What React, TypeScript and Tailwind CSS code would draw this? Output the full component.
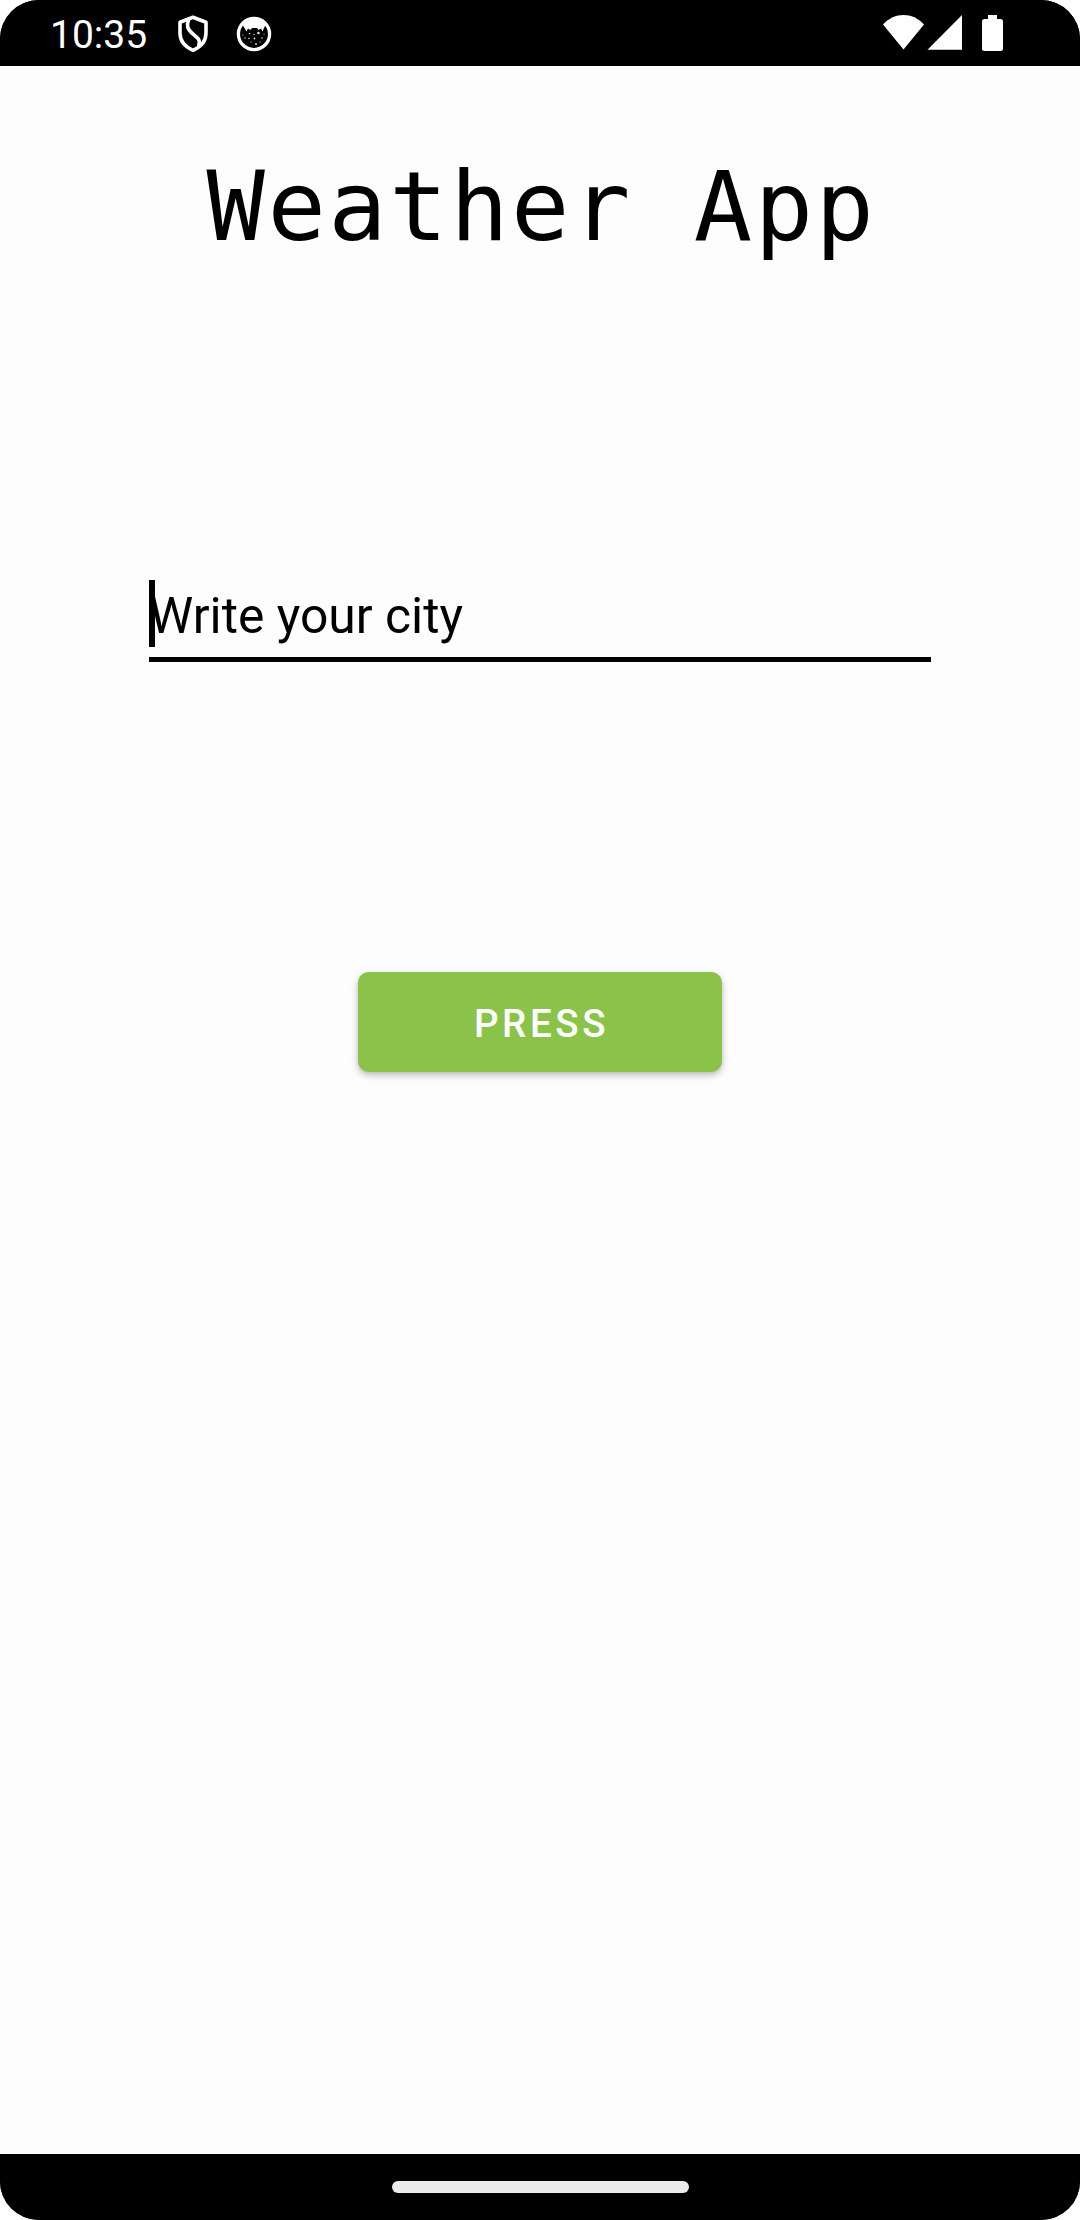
function ShieldIcon() {
  return (
    <svg className="h-[38px] w-[32px]" viewBox="0 0 32 38" fill="none" stroke="#fff" strokeWidth="3.600" strokeLinejoin="round" strokeLinecap="round">
      <path d="M16 2.300 29 7.300V18c0 7.500-4.500 13.600-13 17.300C7.500 31.600 3 25.500 3 18V7.300z" />
      <path d="M11.500 5.200c-2 5-1.500 8.800 3.300 12.800 5.500 4.500 9 6.500 7 12" />
    </svg>
  );
}

function CatIcon() {
  return (
    <svg className="h-[36px] w-[36px]" viewBox="0 0 36 36" fill="none">
      <circle cx="18" cy="18" r="15.600" stroke="#fff" strokeWidth="3.300" />
      <path d="M6 8 8.500 12 10.500 15.500 12 12.500 14.500 14 16 12h5l1.500 2 2.500-1.500 1.500 3L28 12l2-4C25 .5 11 .5 6 8z" fill="#fff" />
      <g fill="#ddd">
        <circle cx="22.500" cy="17" r="1.300" />
        <circle cx="13.500" cy="17.500" r=".8" />
        <circle cx="7" cy="19" r=".6" />
        <circle cx="18" cy="18.500" r=".7" />
        <circle cx="9" cy="22" r=".7" />
        <circle cx="13" cy="22.500" r=".8" />
        <circle cx="18.500" cy="22.500" r=".9" />
        <circle cx="26" cy="22" r=".8" />
        <circle cx="28" cy="18" r=".6" />
        <circle cx="15" cy="26" r=".6" />
        <circle cx="20" cy="28" r=".9" />
        <circle cx="24" cy="26" r=".6" />
      </g>
    </svg>
  );
}

function StatusBar() {
  return (
    <header className="flex h-[66px] shrink-0 items-start bg-black text-white">
      <span className="ml-[50px] mt-[11px] w-[127px] text-[39px] leading-[48px]">10:35</span>
      <div className="mt-[14.500px]">
        <ShieldIcon />
      </div>
      <div className="ml-[27px] mt-[15.500px]">
        <CatIcon />
      </div>
      <svg className="ml-auto mr-[76px] mt-[14px] h-[38px] w-[122px]" viewBox="882 14 122 38" fill="#fff">
        <path d="M903.500 49.500 883 24.500C889 18 896 15 903.500 15S918 18 924 24.500z" />
        <path d="M927.500 49.700 962 15v34.700z" />
        <path d="M988 15h9v4h3.500q2.500 0 2.500 2.500v27q0 2.500-2.500 2.500h-16q-2.500 0-2.500-2.500v-27q0-2.500 2.500-2.500h3.500z" />
      </svg>
    </header>
  );
}

export default function App() {
  return (
    <div className="h-[2220px] w-[1080px] bg-white">
      <div className="flex h-full flex-col overflow-hidden rounded-[39px] bg-black font-['Roboto',sans-serif]">
        <StatusBar />
        <main className="flex flex-1 flex-col items-center bg-[#fdfdfd] text-black">
          <h1 className="mt-[84px] h-[119px] whitespace-pre pl-[3px] font-['DejaVu_Sans_Mono',monospace] text-[97px] leading-[114px] tracking-[2.500px]">
            Weather App
          </h1>
          <div className="relative mt-[311px] flex h-[82px] w-[782px] items-start border-b-[5px] border-black">
            <div className="absolute left-0 top-0 h-[67px] w-[6px] bg-black" />
            <span className="mt-[7px] text-[49.800px] leading-[58px]">Write your city</span>
          </div>
          <button className="mt-[310px] h-[100px] w-[364px] rounded-[11px] bg-[#8bc34a] pl-[3px] pt-[3px] text-[38.500px] font-medium leading-[46px] tracking-[3.600px] text-white shadow-[0_3px_7px_rgba(0,0,0,0.28)]">
            PRESS
          </button>
        </main>
        <nav className="flex h-[66px] shrink-0 items-center justify-center bg-black">
          <div className="h-[11.500px] w-[297px] rounded-full bg-[#ebebeb]" />
        </nav>
      </div>
    </div>
  );
}
